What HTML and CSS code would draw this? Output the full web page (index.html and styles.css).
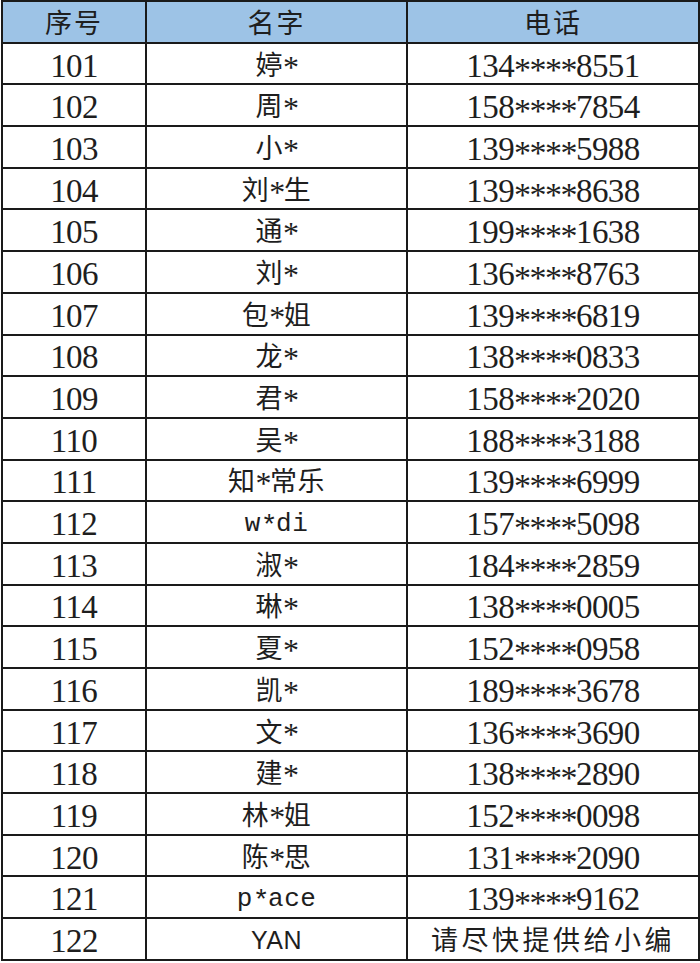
FILE: index.html
```html
<!DOCTYPE html>
<html lang="zh">
<head>
<meta charset="utf-8">
<link rel="stylesheet" href="styles.css">
</head>
<body>
<table class="sheet">
<colgroup><col class="c1"><col class="c2"><col class="c3"></colgroup>
<thead>
<tr><th>序号</th><th>名字</th><th>电话</th></tr>
</thead>
<tbody>
<tr><td>101</td><td>婷<span class="m">*</span></td><td>134<span class="m">****</span>8551</td></tr>
<tr><td>102</td><td>周<span class="m">*</span></td><td>158<span class="m">****</span>7854</td></tr>
<tr><td>103</td><td>小<span class="m">*</span></td><td>139<span class="m">****</span>5988</td></tr>
<tr><td>104</td><td>刘<span class="m">*</span>生</td><td>139<span class="m">****</span>8638</td></tr>
<tr><td>105</td><td>通<span class="m">*</span></td><td>199<span class="m">****</span>1638</td></tr>
<tr><td>106</td><td>刘<span class="m">*</span></td><td>136<span class="m">****</span>8763</td></tr>
<tr><td>107</td><td>包<span class="m">*</span>姐</td><td>139<span class="m">****</span>6819</td></tr>
<tr><td>108</td><td>龙<span class="m">*</span></td><td>138<span class="m">****</span>0833</td></tr>
<tr><td>109</td><td>君<span class="m">*</span></td><td>158<span class="m">****</span>2020</td></tr>
<tr><td>110</td><td>吴<span class="m">*</span></td><td>188<span class="m">****</span>3188</td></tr>
<tr><td>111</td><td>知<span class="m">*</span>常乐</td><td>139<span class="m">****</span>6999</td></tr>
<tr><td>112</td><td class="latin">w<span class="m">*</span>di</td><td>157<span class="m">****</span>5098</td></tr>
<tr><td>113</td><td>淑<span class="m">*</span></td><td>184<span class="m">****</span>2859</td></tr>
<tr><td>114</td><td>琳<span class="m">*</span></td><td>138<span class="m">****</span>0005</td></tr>
<tr><td>115</td><td>夏<span class="m">*</span></td><td>152<span class="m">****</span>0958</td></tr>
<tr><td>116</td><td>凯<span class="m">*</span></td><td>189<span class="m">****</span>3678</td></tr>
<tr><td>117</td><td>文<span class="m">*</span></td><td>136<span class="m">****</span>3690</td></tr>
<tr><td>118</td><td>建<span class="m">*</span></td><td>138<span class="m">****</span>2890</td></tr>
<tr><td>119</td><td>林<span class="m">*</span>姐</td><td>152<span class="m">****</span>0098</td></tr>
<tr><td>120</td><td>陈<span class="m">*</span>思</td><td>131<span class="m">****</span>2090</td></tr>
<tr><td>121</td><td class="latin">p<span class="m">*</span>ace</td><td>139<span class="m">****</span>9162</td></tr>
<tr><td>122</td><td class="sans">YAN</td><td class="note">请尽快提供给小编</td></tr>
</tbody>
</table>
</body>
</html>
```

FILE: styles.css
```css
html, body {
  margin: 0;
  padding: 0;
  background: #ffffff;
}
body {
  padding: 0 0 0 1px;
}
.sheet {
  border-collapse: collapse;
  width: 697px;
  table-layout: fixed;
  font-family: "Liberation Serif", "Noto Sans CJK SC", serif;
  font-size: 33px;
  color: #1e1e1e;
}
.c1 { width: 144px; }
.c2 { width: 261px; }
.c3 { width: 292px; }
.sheet tr {
  height: 41.7px;
}
.sheet th,
.sheet td {
  border: 2px solid #1a1a1a;
  text-align: center;
  vertical-align: middle;
  padding: 4px 0 0 0;
  line-height: 30px;
  letter-spacing: -0.6px;
  white-space: nowrap;
}
.sheet th {
  background: #9dc3e6;
  font-weight: normal;
  font-family: "Noto Sans CJK SC", sans-serif;
  font-size: 27px;
  letter-spacing: 2px;
  padding-top: 0;
}
.sheet td:nth-child(2) {
  font-family: "Noto Sans CJK SC", sans-serif;
  font-size: 27px;
  letter-spacing: 0.5px;
  padding-top: 0;
}
.m {
  position: relative;
  top: 4px;
  font-size: 34px;
  letter-spacing: -1.5px;
}
.sheet td:nth-child(2) .m {
  font-family: "Liberation Serif", serif;
  font-size: 32px;
  top: 3px;
}
.sheet td.latin {
  font-family: "Liberation Mono", monospace;
  font-size: 26px;
  padding-top: 4px;
}
.sheet td.latin .m {
  font-family: "Liberation Mono", monospace;
  font-size: 28px;
  top: 3px;
}
.sheet td.sans {
  font-family: "Liberation Sans", sans-serif;
  font-size: 25px;
  letter-spacing: 0.5px;
  padding-top: 2px;
}
.sheet td.note {
  font-family: "Noto Sans CJK SC", sans-serif;
  font-size: 27px;
  letter-spacing: 3.5px;
  padding-top: 0;
}
```
